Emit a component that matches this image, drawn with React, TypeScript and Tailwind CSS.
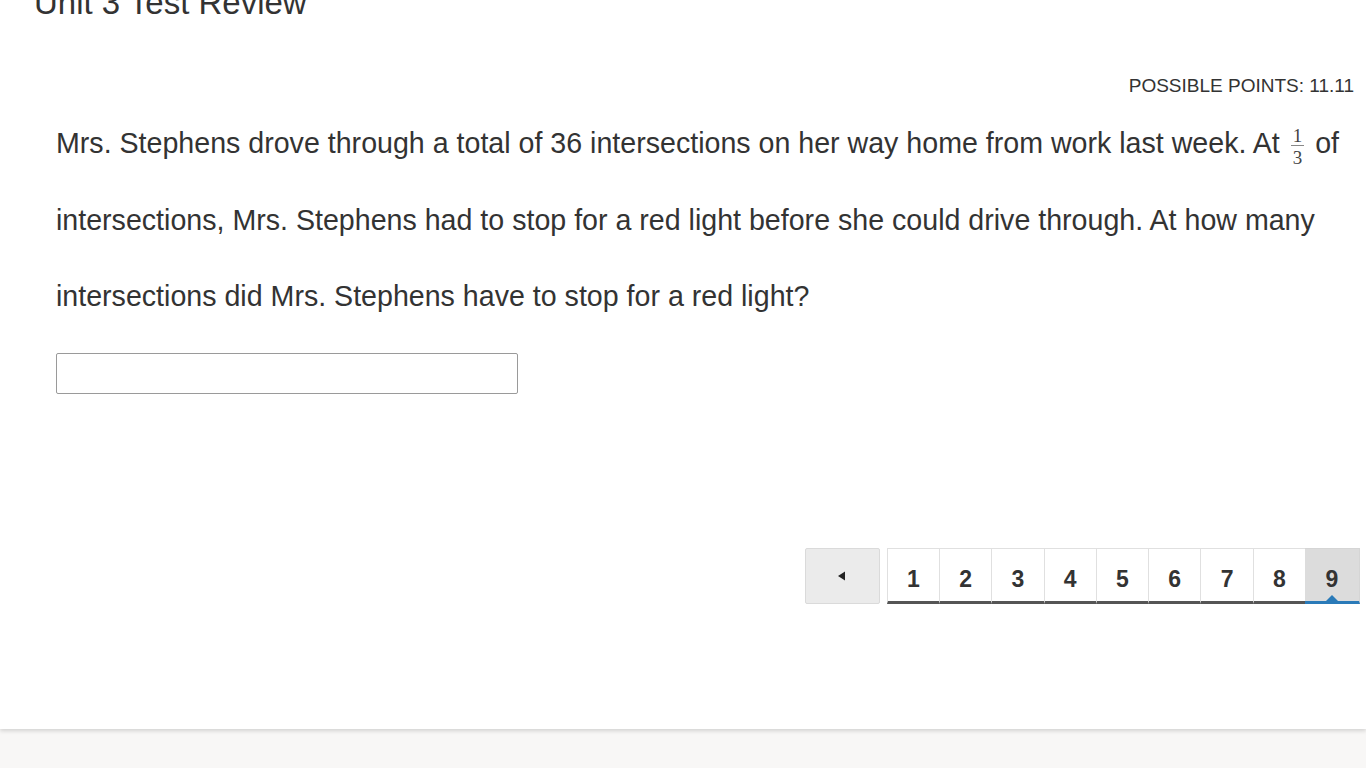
export default function App() {
  const pages = [1, 2, 3, 4, 5, 6, 7, 8, 9];
  return (
    <div className="h-[768px] w-full overflow-hidden bg-[#f8f7f6] font-['Liberation_Sans',Arial,sans-serif] text-[#333]">
      <div className="flex h-[729px] flex-col bg-white shadow-[0_2px_4px_rgba(0,0,0,0.15)]">
        <h1 className="mt-[-17px] pl-[34px] text-[33px] leading-[40px] font-normal text-[#333]">
          Unit 3 Test Review
        </h1>
        <div className="mt-[52px] pr-[12px] text-right text-[19px] leading-[22px] text-[#333]">
          POSSIBLE POINTS: 11.11
        </div>
        <div className="mt-[8px] pl-[56px] pr-[10px] text-[28.6px] leading-[76.5px] text-[#333]">
          Mrs. Stephens drove through a total of 36 intersections on her way home from work last week. At{" "}
          <span className="relative top-[1px] mx-[3px] inline-flex flex-col items-center align-middle font-['Liberation_Serif','DejaVu_Serif',serif] text-[19px] leading-[17px] text-[#444]">
            <span className="border-b border-[#888] px-[2px] pb-[1px]">1</span>
            <span className="px-[2px] pt-[3px]">3</span>
          </span>{" "}
          of intersections, Mrs. Stephens had to stop for a red light before she could drive through. At how many
          intersections did Mrs. Stephens have to stop for a red light?
        </div>
        <div className="mt-[18px] pl-[56px]">
          <input
            type="text"
            className="block h-[41px] w-[462px] rounded-[2px] border border-[#9a9a9a] bg-white outline-none"
          />
        </div>
        <div className="mt-[154px] flex justify-end pr-[6px]">
          <button className="flex h-[56px] w-[75px] items-center justify-center rounded-[2px] border border-[#dadada] bg-[#ebebeb]">
            <svg width="10" height="10" viewBox="0 0 10 10">
              <path d="M1 5 L8 0.5 L8 9.5 Z" fill="#222" />
            </svg>
          </button>
          <div className="ml-[7px] flex">
            {pages.map((p) => (
              <div
                key={p}
                className={
                  p === 9
                    ? "relative flex h-[56px] w-[55px] items-center justify-center border-t border-r border-[#d5d5d5] border-b-[3px] border-b-[#2a7ab8] bg-[#dcdcdc] pt-[9px] text-[23px] font-bold text-[#333]"
                    : "relative flex h-[56px] w-[52.3px] items-center justify-center border-t border-l border-[#e0e0e0] border-b-[3px] border-b-[#555] bg-white pt-[9px] text-[23px] font-bold text-[#333]"
                }
              >
                {p}
                {p === 9 && (
                  <svg className="absolute bottom-0 left-1/2 -translate-x-1/2" width="12" height="6" viewBox="0 0 12 6">
                    <path d="M0 6 L6 0 L12 6 Z" fill="#2a7ab8" />
                  </svg>
                )}
              </div>
            ))}
          </div>
        </div>
      </div>
    </div>
  );
}
